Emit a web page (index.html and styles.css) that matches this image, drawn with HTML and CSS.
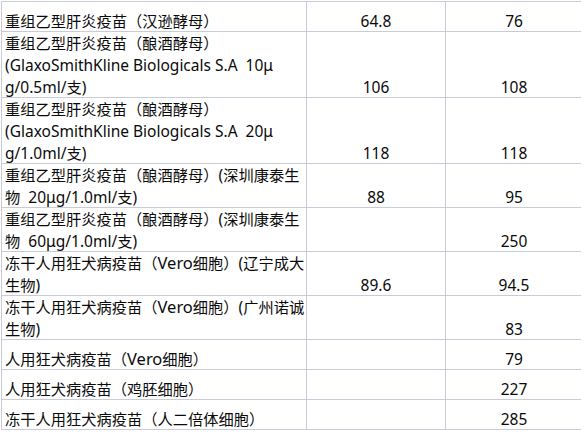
FILE: index.html
```html
<!DOCTYPE html>
<html>
<head>
<meta charset="utf-8">
<link rel="stylesheet" href="styles.css">
</head>
<body>
<div class="sheet">
  <div class="cell r1 name"><div class="txt">重组乙型肝炎疫苗<span class="fp">（</span>汉逊酵母<span class="fp">）</span></div></div><div class="cell r1 num"><div class="txt">64.8</div></div><div class="cell r1 num"><div class="txt">76</div></div>
  <div class="cell r3 name"><div class="txt">重组乙型肝炎疫苗<span class="fp">（</span>酿酒酵母<span class="fp">）</span><br><span class="lat">(GlaxoSmithKline Biologicals S.A  10μ</span><br><span class="lat">g/0.5ml/</span>支<span class="lat">)</span></div></div><div class="cell r3 num"><div class="txt">106</div></div><div class="cell r3 num"><div class="txt">108</div></div>
  <div class="cell r3 name"><div class="txt">重组乙型肝炎疫苗<span class="fp">（</span>酿酒酵母<span class="fp">）</span><br><span class="lat">(GlaxoSmithKline Biologicals S.A  20μ</span><br><span class="lat">g/1.0ml/</span>支<span class="lat">)</span></div></div><div class="cell r3 num"><div class="txt">118</div></div><div class="cell r3 num"><div class="txt">118</div></div>
  <div class="cell r2 name"><div class="txt">重组乙型肝炎疫苗<span class="fp">（</span>酿酒酵母<span class="fp">）</span><span class="lat">(</span>深圳康泰生<br>物<span class="lat">  20μg/1.0ml/</span>支<span class="lat">)</span></div></div><div class="cell r2 num"><div class="txt">88</div></div><div class="cell r2 num"><div class="txt">95</div></div>
  <div class="cell r2 name"><div class="txt">重组乙型肝炎疫苗<span class="fp">（</span>酿酒酵母<span class="fp">）</span><span class="lat">(</span>深圳康泰生<br>物<span class="lat">  60μg/1.0ml/</span>支<span class="lat">)</span></div></div><div class="cell r2 num"><div class="txt"></div></div><div class="cell r2 num"><div class="txt">250</div></div>
  <div class="cell r2 name"><div class="txt">冻干人用狂犬病疫苗<span class="fp">（</span><span class="lat vero">Vero</span>细胞<span class="fp">）</span><span class="lat">(</span>辽宁成大<br>生物<span class="lat">)</span></div></div><div class="cell r2 num"><div class="txt">89.6</div></div><div class="cell r2 num"><div class="txt">94.5</div></div>
  <div class="cell r2 name"><div class="txt">冻干人用狂犬病疫苗<span class="fp">（</span><span class="lat vero">Vero</span>细胞<span class="fp">）</span><span class="lat">(</span>广州诺诚<br>生物<span class="lat">)</span></div></div><div class="cell r2 num"><div class="txt"></div></div><div class="cell r2 num"><div class="txt">83</div></div>
  <div class="cell r1 name"><div class="txt">人用狂犬病疫苗<span class="fp">（</span><span class="lat vero">Vero</span>细胞<span class="fp">）</span></div></div><div class="cell r1 num"><div class="txt"></div></div><div class="cell r1 num"><div class="txt">79</div></div>
  <div class="cell r1 name"><div class="txt">人用狂犬病疫苗<span class="fp">（</span>鸡胚细胞<span class="fp">）</span></div></div><div class="cell r1 num"><div class="txt"></div></div><div class="cell r1 num"><div class="txt">227</div></div>
  <div class="cell r1 name"><div class="txt">冻干人用狂犬病疫苗<span class="fp">（</span>人二倍体细胞<span class="fp">）</span></div></div><div class="cell r1 num"><div class="txt"></div></div><div class="cell r1 num"><div class="txt">285</div></div>
</div>
</body>
</html>
```
FILE: styles.css
```css
html, body {
  margin: 0;
  padding: 0;
  background: #ffffff;
}
body {
  font-family: "Noto Sans", "Noto Sans CJK SC", sans-serif;
  font-size: 15.25px;
  color: #0a0a0a;
  text-spacing-trim: space-all;
}
.sheet {
  display: grid;
  grid-template-columns: 304px 138px 136px;
  gap: 1px;
  padding: 1px;
  background: #cacbd8;
  margin: 1px 0 0 1px;
  width: 580px;
  box-sizing: border-box;
}
.cell {
  background: #ffffff;
  display: flex;
  flex-direction: column;
  justify-content: flex-end;
  line-height: 22px;
  white-space: pre;
  overflow: visible;
}
.txt {
  margin-bottom: -1px;
}
.r1 { height: 29px; }
.r2 { height: 43px; }
.r3 { height: 65px; }
.name {
  padding-left: 3px;
  text-align: left;
}
.num {
  text-align: center;
  font-size: 15.5px;
}
.lat {
  font-size: 15.5px;
}
.lat.vero {
  font-size: 16.5px;
}
.fp {
  font-family: "Noto Sans CJK TC", "Noto Sans CJK SC", sans-serif;
}
```
